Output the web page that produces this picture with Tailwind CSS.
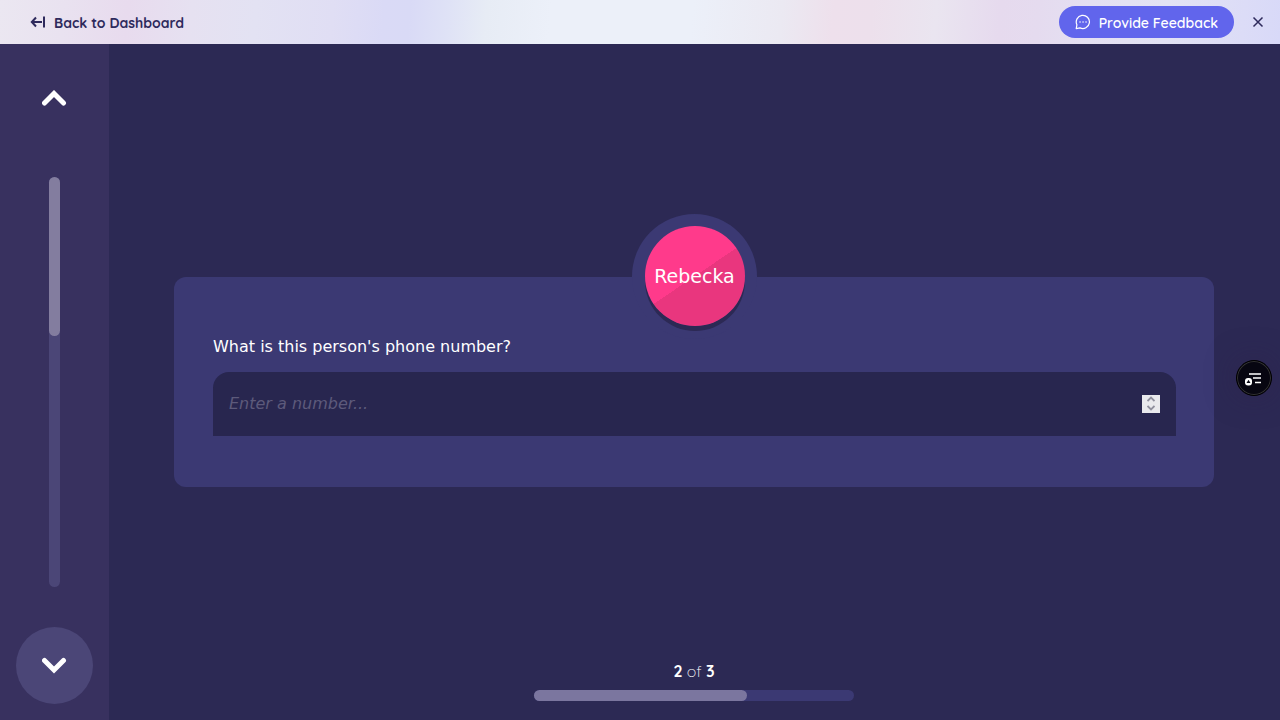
<!DOCTYPE html>
<html lang="en">
<head>
<meta charset="utf-8">
<meta name="viewport" content="width=device-width, initial-scale=1">
<title>Question 2 of 3</title>
<script src="https://cdn.jsdelivr.net/npm/@tailwindcss/browser@4"></script>
</head>
<body class="flex h-screen flex-col overflow-hidden bg-[#2c2954] font-['DejaVu_Sans',sans-serif] text-white">
  <header class="flex h-11 shrink-0 items-center justify-between bg-[linear-gradient(95deg,#ebe7f1_0%,#e9e2f0_5%,#e8dbee_10%,#e6e1f1_15%,#e3e2f3_20%,#e0def4_26%,#dadaf6_30%,#d9daf6_32%,#dfe2f6_35%,#e7ecf5_38%,#ecf0f9_43%,#ecf0f9_54%,#ebe9f2_61%,#eee0ec_65%,#ede0ec_68%,#eae5f0_73%,#e6daee_78%,#e5dbef_81%,#e4e0f2_85%,#e2e2f4_91%,#dcdcf7_97%,#d8d9f8_100%)] pr-3.5 pl-[30px] font-['Quicksand','Lato',sans-serif] text-[#2e2a5c]">
    <a href="#" class="flex items-center gap-2 text-sm font-bold">
      <svg class="h-4 w-4" viewBox="0 0 16 16" fill="none" stroke="currentColor" stroke-width="2" aria-hidden="true"><path d="M12 8H2M6 3.500L1.800 8L6 12.500M14 2.500V13.500"/></svg>
      <span class="pt-0.5">Back to Dashboard</span>
    </a>
    <div class="flex items-center gap-4">
      <button type="button" class="flex h-8 items-center gap-2 rounded-full bg-[#6165ec] px-4 text-sm font-semibold text-white">
        <svg class="h-4 w-4" viewBox="0 0 16 16" fill="none" stroke="currentColor" stroke-width="1.200" stroke-linecap="round" stroke-linejoin="round" aria-hidden="true"><path d="M1.200 14.600L1.900 10.800A6.600 6.600 0 1 1 5 13.900Z"/><path d="M5 8h.1M8 8h.1M11 8h.1" stroke-width="1.400"/></svg>
        <span class="pt-0.5">Provide Feedback</span>
      </button>
      <button type="button" aria-label="Close" class="flex h-4 w-4 items-center justify-center">
        <svg class="h-4 w-4" viewBox="0 0 16 16" fill="none" stroke="currentColor" stroke-width="1.500" aria-hidden="true"><path d="M3.500 3.500L12.500 12.500M12.500 3.500L3.500 12.500"/></svg>
      </button>
    </div>
  </header>
  <div class="flex min-h-0 flex-1">
    <nav aria-label="Questions" class="flex w-[109px] shrink-0 flex-col items-center gap-10 bg-[#38315f] py-4">
      <button type="button" aria-label="Previous question" class="flex size-[77px] shrink-0 items-center justify-center rounded-full">
        <svg class="h-[17px] w-[25px]" viewBox="0 0 25 17" fill="none" stroke="white" stroke-width="5" stroke-linecap="round" aria-hidden="true"><path d="M2.500 13L12 3.500L21.500 13"/></svg>
      </button>
      <div class="w-[11px] flex-1 rounded-full bg-[#4b4677]"><div class="h-[159px] rounded-full bg-[#837d9f]"></div></div>
      <button type="button" aria-label="Next question" class="flex size-[77px] shrink-0 items-center justify-center rounded-full bg-[#4b4677]">
        <svg class="h-[17px] w-[25px]" viewBox="0 0 25 17" fill="none" stroke="white" stroke-width="5" stroke-linecap="round" aria-hidden="true"><path d="M2.500 3.500L12 13L21.500 3.500"/></svg>
      </button>
    </nav>
    <main class="flex min-w-0 flex-1 flex-col pr-px">
      <section class="flex flex-1 flex-col justify-center px-[65px] pt-[60px]">
        <div class="flex flex-col rounded-xl bg-[#3b3973] pr-[38px] pb-[51px] pl-[39px]">
          <div class="-mt-[63px] flex size-[125px] shrink-0 items-center justify-center self-center rounded-full bg-[#3b3973]">
            <div class="flex size-[100px] items-center justify-center rounded-full bg-[linear-gradient(146deg,#ff3a8b_50%,#e9367e_50%)] text-[19px] shadow-[0_5px_0_#2c2954]">Rebecka</div>
          </div>
          <label for="phone" class="-mt-1 mb-[13px] text-base leading-6">What is this person's phone number?</label>
          <div class="flex h-16 items-center rounded-t-2xl bg-[#28264f] px-4">
            <input id="phone" type="number" placeholder="Enter a number..." class="min-w-0 flex-1 appearance-none bg-transparent text-base text-white outline-none [-moz-appearance:textfield] placeholder:text-[#5d5a7b] placeholder:italic [&::-webkit-inner-spin-button]:appearance-none">
            <div class="flex size-[18px] flex-col bg-[#e9e9ed] text-[#8f8f9d]">
              <button type="button" aria-label="Increase" class="flex flex-1 items-center justify-center"><svg class="h-1.5 w-2" viewBox="0 0 8 6" fill="none" stroke="currentColor" stroke-width="1.800" aria-hidden="true"><path d="M.5 5L4 1.500L7.500 5"/></svg></button>
              <button type="button" aria-label="Decrease" class="flex flex-1 items-center justify-center"><svg class="h-1.5 w-2" viewBox="0 0 8 6" fill="none" stroke="currentColor" stroke-width="1.800" aria-hidden="true"><path d="M.5 1L4 4.500L7.500 1"/></svg></button>
            </div>
          </div>
        </div>
      </section>
      <footer class="flex flex-col items-center gap-[7px] pb-[19px]">
        <p class="font-['Quicksand','Lato',sans-serif] text-base leading-6 font-light"><b class="font-bold">2</b> of <b class="font-bold">3</b></p>
        <div class="h-[11px] w-80 rounded-full bg-[#3b3973]"><div class="h-full w-2/3 rounded-full bg-[#7b769f]"></div></div>
      </footer>
    </main>
  </div>
  <button type="button" aria-label="Open menu" class="fixed top-[360px] right-2 flex size-9 items-center justify-center rounded-full border border-black bg-[#070611] shadow-[0_0_30px_#2e224c80] ring-1 ring-[#333] ring-inset">
    <svg class="mr-0.5 h-4 w-4" viewBox="0 0 16 16" aria-hidden="true"><path d="M4 4H16M8 8H16M10 12.500H16" stroke="white" stroke-width="1.300"/><rect y="8" width="7" height="7.500" rx="3" fill="white"/><path d="M3.500 9.800L5.500 13H1.500Z" fill="#070611"/></svg>
  </button>
</body>
</html>
